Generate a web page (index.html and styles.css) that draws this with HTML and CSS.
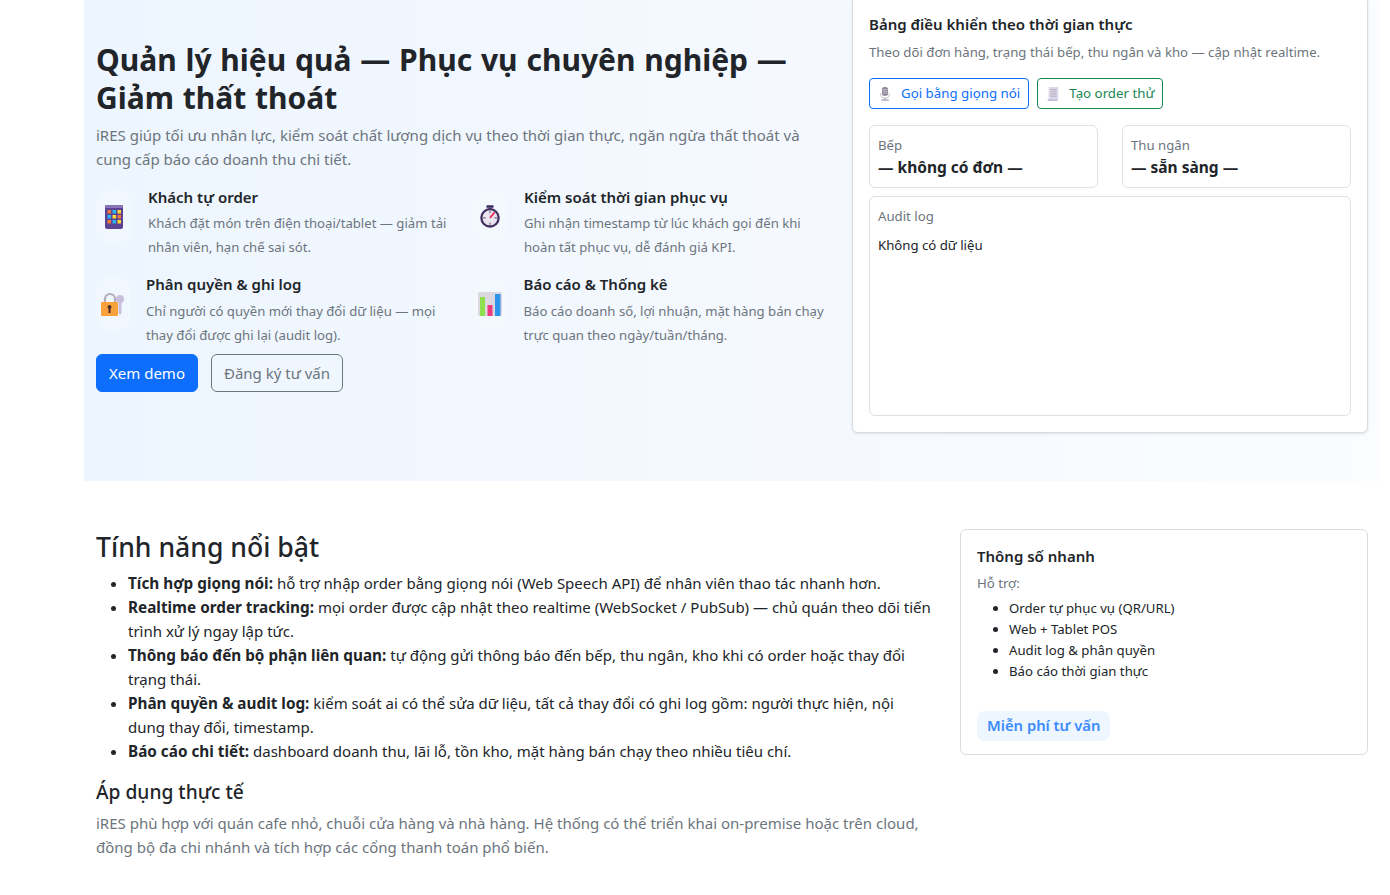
FILE: index.html
```html
<!DOCTYPE html>
<html lang="en">
<head>
  <meta charset="UTF-8">
  <title>iRES</title>
  <link rel="stylesheet" href="styles.css">
</head>
<body>

<div class="hero-wrap">
  <section class="hero">
    <div class="hero-left">
      <h1>Quản lý hiệu quả — Phục vụ chuyên nghiệp — Giảm thất thoát</h1>
      <p class="lead">iRES giúp tối ưu nhân lực, kiểm soát chất lượng dịch vụ theo thời gian thực, ngăn ngừa thất thoát và cung cấp báo cáo doanh thu chi tiết.</p>

      <div class="features">
        <div class="feature">
          <div class="feature-icon">
            <svg width="18" height="24" viewBox="0 0 18 24">
              <rect width="18" height="24" rx="2" fill="#5b4391"/>
              <rect y="0" width="18" height="3" rx="1" fill="#8a74b8"/>
              <rect x="2.500" y="5" width="3.500" height="3.500" fill="#f5793b"/>
              <rect x="7.500" y="5" width="3.500" height="3.500" fill="#29b6f6"/>
              <rect x="12.500" y="5" width="3.500" height="3.500" fill="#fdd835"/>
              <rect x="2.500" y="10" width="3.500" height="3.500" fill="#29b6f6"/>
              <rect x="7.500" y="10" width="3.500" height="3.500" fill="#fdd835"/>
              <rect x="12.500" y="10" width="3.500" height="3.500" fill="#f5793b"/>
              <rect x="2.500" y="15" width="3.500" height="3.500" fill="#f5793b"/>
              <rect x="7.500" y="15" width="3.500" height="3.500" fill="#29b6f6"/>
              <rect x="12.500" y="15" width="3.500" height="3.500" fill="#fdd835"/>
            </svg>
          </div>
          <div>
            <h6>Khách tự order</h6>
            <p>Khách đặt món trên điện thoại/tablet — giảm tải nhân viên, hạn chế sai sót.</p>
          </div>
        </div>

        <div class="feature">
          <div class="feature-icon">
            <svg width="20" height="23" viewBox="0 0 22 25">
              <rect x="7" y="0" width="8" height="3" rx="1" fill="#3b2a5c"/>
              <rect x="9.500" y="3" width="3" height="2" fill="#3b2a5c"/>
              <circle cx="11" cy="14" r="9.500" fill="#e9e4ee" stroke="#43305f" stroke-width="2.500"/>
              <path d="M11 14 L16 8" stroke="#e8305f" stroke-width="2"/>
              <path d="M11 6.500V9M11 19v2.500M3.500 14H6M16 14h2.500" stroke="#6b5a80" stroke-width="1.200"/>
            </svg>
          </div>
          <div>
            <h6>Kiểm soát thời gian phục vụ</h6>
            <p>Ghi nhận timestamp từ lúc khách gọi đến khi hoàn tất phục vụ, dễ đánh giá KPI.</p>
          </div>
        </div>

        <div class="feature feature-low">
          <div class="feature-icon feature-icon-lock">
            <svg width="24" height="24" viewBox="0 0 24 24">
              <circle cx="19" cy="7" r="4" fill="#c9bfdc"/>
              <path d="M17.500 9h3v12l-1.500 2-1.500-2z" fill="#c9bfdc"/>
              <path d="M4 11V7a5 5 0 0 1 10 0v4" fill="none" stroke="#b4adb8" stroke-width="2.200"/>
              <rect x="0" y="10" width="17" height="14" rx="1" fill="#f9a13a"/>
              <path d="M8.500 13a2 2 0 0 1 1 3.700V21h-2v-4.300a2 2 0 0 1 1-3.700z" fill="#4a2c2a"/>
            </svg>
          </div>
          <div>
            <h6>Phân quyền &amp; ghi log</h6>
            <p>Chỉ người có quyền mới thay đổi dữ liệu — mọi thay đổi được ghi lại (audit log).</p>
          </div>
        </div>

        <div class="feature feature-low">
          <div class="feature-icon feature-icon-chart">
            <svg width="24" height="24" viewBox="0 0 24 24">
              <rect width="24" height="24" rx="2" fill="#dcd8e2"/>
              <rect x="2" y="5" width="5" height="19" fill="#8ee04f"/>
              <rect x="9.500" y="13" width="5" height="11" fill="#ec3a7c"/>
              <rect x="17" y="2" width="5.500" height="22" fill="#2f95ea"/>
            </svg>
          </div>
          <div>
            <h6>Báo cáo &amp; Thống kê</h6>
            <p>Báo cáo doanh số, lợi nhuận, mặt hàng bán chạy trực quan theo ngày/tuần/tháng.</p>
          </div>
        </div>
      </div>

      <div class="hero-actions">
        <a href="#" class="btn btn-primary">Xem demo</a>
        <a href="#" class="btn btn-outline">Đăng ký tư vấn</a>
      </div>
    </div>

    <aside class="panel">
      <h5>Bảng điều khiển theo thời gian thực</h5>
      <p class="panel-sub">Theo dõi đơn hàng, trạng thái bếp, thu ngân và kho — cập nhật realtime.</p>
      <div class="panel-actions">
        <button class="btn-small btn-blue">
          <svg width="14" height="14" viewBox="0 0 12 16">
            <rect x="2.500" y="0" width="7" height="10" rx="3" fill="#8b8494"/>
            <path d="M3 3h6M3 5h6M3 7h6" stroke="#d6d2dc" stroke-width="0.800"/>
            <path d="M1 7v1a5 5 0 0 0 10 0V7" fill="none" stroke="#c9c5cf" stroke-width="1.200"/>
            <rect x="1.500" y="14" width="9" height="2" rx="1" fill="#bdb8c4"/>
            <rect x="5.300" y="12" width="1.400" height="3" fill="#bdb8c4"/>
          </svg>
          Gọi bằng giọng nói
        </button>
        <button class="btn-small btn-green">
          <svg width="14" height="14" viewBox="0 0 12 16">
            <rect x="1" y="0" width="11" height="15" fill="#ddd8e8"/>
            <rect x="0" y="14" width="11" height="2" fill="#c6bede"/>
            <path d="M3 3h7M3 5.500h7M3 8h7M3 10.500h7" stroke="#a9a1b8" stroke-width="0.900"/>
          </svg>
          Tạo order thử
        </button>
      </div>
      <div class="status-row">
        <div class="status-box">
          <div class="status-label">Bếp</div>
          <div class="status-value">— không có đơn —</div>
        </div>
        <div class="status-box">
          <div class="status-label">Thu ngân</div>
          <div class="status-value">— sẵn sàng —</div>
        </div>
      </div>
      <div class="log-box">
        <div class="status-label">Audit log</div>
        <div class="log-empty">Không có dữ liệu</div>
      </div>
    </aside>
  </section>
</div>

<section class="content">
  <div class="content-main">
    <h3>Tính năng nổi bật</h3>
    <ul>
      <li><strong>Tích hợp giọng nói:</strong> hỗ trợ nhập order bằng giọng nói (Web Speech API) để nhân viên thao tác nhanh hơn.</li>
      <li><strong>Realtime order tracking:</strong> mọi order được cập nhật theo realtime (WebSocket / PubSub) — chủ quán theo dõi tiến trình xử lý ngay lập tức.</li>
      <li><strong>Thông báo đến bộ phận liên quan:</strong> tự động gửi thông báo đến bếp, thu ngân, kho khi có order hoặc thay đổi trạng thái.</li>
      <li><strong>Phân quyền &amp; audit log:</strong> kiểm soát ai có thể sửa dữ liệu, tất cả thay đổi có ghi log gồm: người thực hiện, nội dung thay đổi, timestamp.</li>
      <li><strong>Báo cáo chi tiết:</strong> dashboard doanh thu, lãi lỗ, tồn kho, mặt hàng bán chạy theo nhiều tiêu chí.</li>
    </ul>
    <h5 class="apply-title">Áp dụng thực tế</h5>
    <p class="apply-text">iRES phù hợp với quán cafe nhỏ, chuỗi cửa hàng và nhà hàng. Hệ thống có thể triển khai on-premise hoặc trên cloud, đồng bộ đa chi nhánh và tích hợp các cổng thanh toán phổ biến.</p>
  </div>

  <aside class="quick">
    <h6>Thông số nhanh</h6>
    <p class="quick-sub">Hỗ trợ:</p>
    <ul>
      <li>Order tự phục vụ (QR/URL)</li>
      <li>Web + Tablet POS</li>
      <li>Audit log &amp; phân quyền</li>
      <li>Báo cáo thời gian thực</li>
    </ul>
    <span class="quick-badge">Miễn phí tư vấn</span>
  </aside>
</section>

</body>
</html>
```

FILE: styles.css
```css
* {
  box-sizing: border-box;
}
body {
  margin: 0;
  font-family: "Noto Sans", "Open Sans", sans-serif;
  font-size: 15px;
  line-height: 24px;
  color: #212529;
  background: #fff;
  overflow: hidden;
  height: 895px;
}
h1, h3, h5, h6, p, ul {
  margin: 0;
}
.hero-wrap {
  padding: 0 10px 0 84px;
}
.hero {
  display: flex;
  height: 481px;
  background: linear-gradient(90deg, #edf5fe, #f5f9ff 55%, #fbfcff);
  padding: 0 12px;
}
.hero-left {
  width: 740px;
  flex: none;
  padding-top: 41px;
}
h1 {
  font-size: 30px;
  line-height: 38px;
  font-weight: 700;
  word-spacing: 1px;
}
.lead {
  margin-top: 6px;
  color: #6c757d;
}
.features {
  display: grid;
  grid-template-columns: 1fr 1fr;
  column-gap: 12px;
  row-gap: 13px;
  margin-top: 14px;
  margin-bottom: 7px;
}
.feature {
  display: flex;
  gap: 16px;
  padding-right: 8px;
}
.feature-icon {
  flex: none;
  width: 36px;
  height: 53px;
  margin-top: 5px;
  border-radius: 12px;
  background: rgba(255,255,255,0.2);
  display: flex;
  align-items: center;
  justify-content: center;
}
.feature-icon-lock {
  width: 34px;
}
.feature-icon-chart {
  width: 35.500px;
}
h6 {
  font-size: 15px;
  line-height: 24px;
  font-weight: 600;
}
.feature p {
  font-size: 13.150px;
  line-height: 24px;
  margin-top: 2px;
  color: #6c757d;
}
.feature-low p {
  margin-top: 3px;
}
.hero-actions {
  display: flex;
  gap: 13px;
}
.btn {
  display: inline-block;
  padding: 6px 12px;
  border-radius: 6px;
  text-decoration: none;
  border: 1px solid #6c757d;
  color: #6c757d;
}
.btn-primary {
  background: #0d6efd;
  border-color: #0d6efd;
  color: #fff;
}
.panel {
  width: 516px;
  flex: none;
  margin-left: 16px;
  height: 438px;
  margin-top: -5px;
  padding: 16px;
  background: #fff;
  border: 1px solid #d9dce0;
  border-radius: 6px;
  box-shadow: 0 1px 3px rgba(0,0,0,0.1);
}
.panel h5 {
  font-size: 15px;
  line-height: 24px;
  font-weight: 600;
}
.panel-sub {
  font-size: 13.200px;
  color: #6c757d;
  line-height: 21px;
  margin-top: 6px;
}
.panel-actions {
  display: flex;
  gap: 8px;
  margin-top: 15px;
}
.btn-small {
  font: inherit;
  font-size: 13.300px;
  line-height: 21px;
  padding: 4px 8px;
  background: #fff;
  border-radius: 4px;
  display: inline-flex;
  align-items: center;
  gap: 9px;
}
.btn-blue {
  border: 1px solid #0d6efd;
  color: #0d6efd;
}
.btn-green {
  border: 1px solid #198754;
  color: #198754;
}
.status-row {
  display: flex;
  gap: 24px;
  margin-top: 16px;
}
.status-box {
  flex: 1;
  height: 63px;
  padding: 8px;
  border: 1px solid #dee2e6;
  border-radius: 6px;
}
.status-label {
  font-size: 13.200px;
  line-height: 21px;
  padding-top: 1px;
  color: #6c757d;
}
.status-value {
  font-size: 15.500px;
  font-weight: 700;
  line-height: 24px;
  margin-top: -1px;
}
.log-box {
  margin-top: 8px;
  height: 220px;
  padding: 8px;
  border: 1px solid #dee2e6;
  border-radius: 6px;
}
.log-empty {
  font-size: 13.200px;
  margin-top: 6px;
}
.content {
  display: flex;
  padding: 49px 22px 0 96px;
  gap: 24px;
}
.content-main {
  flex: 1;
}
h3 {
  font-size: 26.600px;
  line-height: 34px;
  font-weight: 500;
  margin-bottom: 7px;
}
.content-main ul {
  padding-left: 32px;
  padding-right: 4px;
  margin-bottom: 16px;
}
.content-main strong {
  font-size: 15.300px;
}
.apply-title {
  font-size: 19.200px;
  line-height: 26px;
  font-weight: 500;
  margin-bottom: 6px;
}
.apply-text {
  color: #6c757d;
}
.quick {
  flex: none;
  width: 408px;
  height: 226px;
  margin-top: -1px;
  padding: 14px 16px;
  border: 1px solid #d9dce0;
  border-radius: 6px;
}
.quick-sub {
  font-size: 13.200px;
  color: #6c757d;
  line-height: 21px;
  margin-top: 5px;
}
.quick ul {
  font-size: 13.200px;
  line-height: 21px;
  padding-left: 32px;
  margin-top: 4px;
}
.quick-badge {
  display: inline-block;
  margin-top: 29px;
  padding: 3px 10px 4px;
  background: #eef6ff;
  color: #3d8bfd;
  font-size: 14.800px;
  line-height: 23px;
  font-weight: 600;
  border-radius: 8px;
}
```
